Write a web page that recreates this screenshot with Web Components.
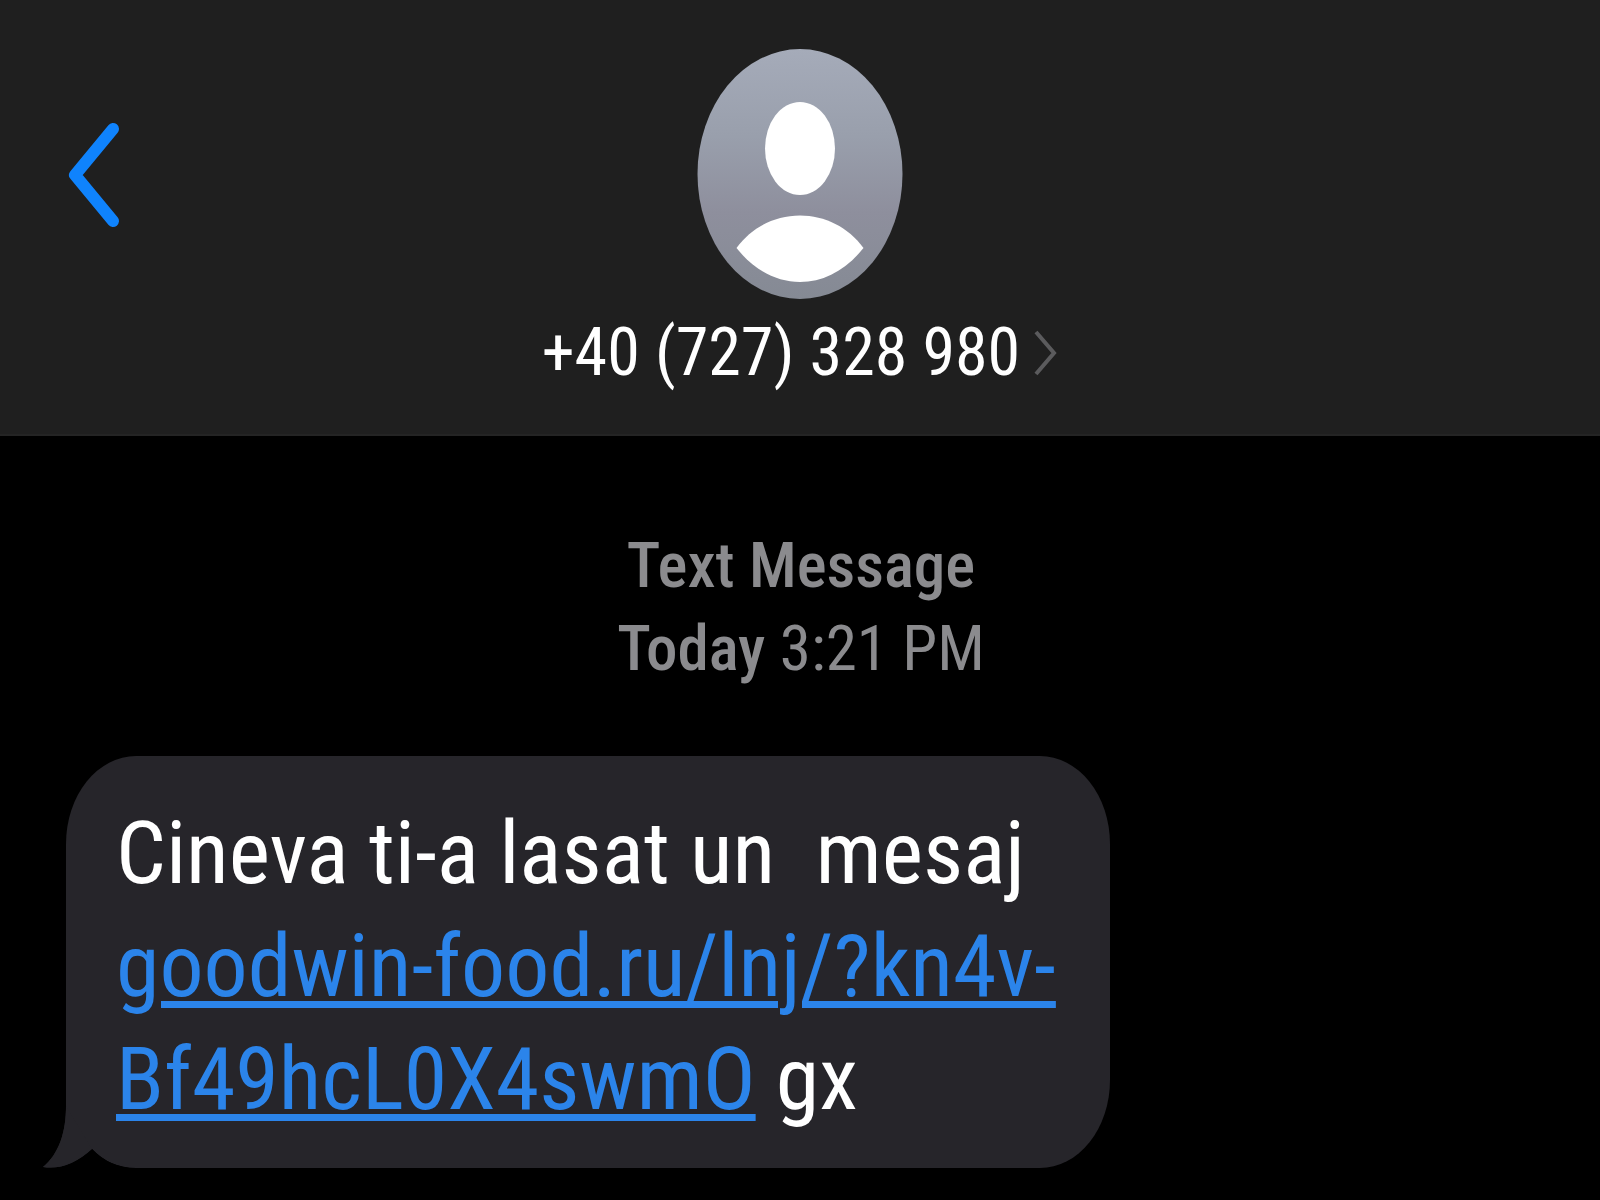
<!DOCTYPE html>
<html lang="ro">
<head>
<meta charset="utf-8">
<meta name="viewport" content="width=device-width, initial-scale=1">
<title>Messages</title>
<style>
html, body { margin: 0; background: #000; }
body { min-height: 100vh; font-family: "Roboto Condensed", "Roboto", sans-serif; color: #fff; }
</style>
</head>
<body>
<chat-screen>
  <chat-header slot="header">+40 (727) 328 980</chat-header>
  <chat-stamp><span>Text Message</span><span slot="day">Today</span><span slot="time">3:21 PM</span></chat-stamp>
  <chat-bubble>Cineva ti-a lasat un&nbsp; mesaj <a href="#">goodwin-food.ru/lnj/?kn4v-Bf49hcL0X4swmO</a> gx</chat-bubble>
</chat-screen>
<script>
const define = (name, html) => {
  const template = document.createElement('template');
  template.innerHTML = html;
  customElements.define(name, class extends HTMLElement {
    constructor() {
      super();
      this.attachShadow({ mode: 'open' }).append(template.content.cloneNode(true));
    }
  });
};

define('contact-avatar', `
<style>
:host { display: block; width: 206px; height: 250px; }
svg { display: block; width: 100%; height: 100%; }
</style>
<svg viewBox="0 0 206 250" aria-hidden="true">
  <defs><linearGradient id="g" x1="0" y1="0" x2="0" y2="1">
    <stop offset="0" stop-color="#a5abb9"/><stop offset=".35" stop-color="#999fac"/>
    <stop offset=".65" stop-color="#8e8f9d"/><stop offset="1" stop-color="#858a94"/>
  </linearGradient></defs>
  <ellipse cx="103" cy="125" rx="102.5" ry="125" fill="url(#g)"/>
  <ellipse cx="103" cy="99.500" rx="35" ry="46.500" fill="#fff"/>
  <path d="M39.500 199 C55 178 78 166.500 103 166.500 C128 166.500 151 178 166.500 199 C149 221 127 233 103 233 C79 233 57 221 39.500 199Z" fill="#fff"/>
</svg>`);

define('chat-header', `
<style>
:host { display: block; background: #1f1f1f; border-bottom: 2px solid #242424; }
header { display: grid; grid-template-columns: 1fr auto 1fr; padding: 49px 64px 43px; }
button { border: 0; background: none; padding: 0; color: inherit; font: inherit; cursor: pointer; }
.back { justify-self: start; align-self: start; padding-top: 72px; }
svg { display: block; }
.contact { display: flex; flex-direction: column; align-items: center; gap: 15px; }
.name { display: flex; align-items: center; gap: 14px; font-size: 66px; line-height: 77px; white-space: nowrap; }
</style>
<header>
  <button class="back" aria-label="Back"><svg width="60" height="108" viewBox="0 0 60 108"><path d="M49 8 L11 54 L49 100" fill="none" stroke="#0f83fd" stroke-width="12" stroke-linecap="round" stroke-linejoin="round"/></svg></button>
  <button class="contact">
    <contact-avatar></contact-avatar>
    <span class="name"><slot></slot><svg width="24" height="46" viewBox="0 0 24 46" aria-hidden="true"><path d="M2 2 L20 23 L2 44" fill="none" stroke="#5b5b5d" stroke-width="4"/></svg></span>
  </button>
</header>`);

define('chat-stamp', `
<style>
:host { display: block; text-align: center; color: #8b8b8e; font-size: 63px; line-height: 83px; font-weight: 500; }
div { white-space: nowrap; }
::slotted([slot="time"]) { font-weight: 400; }
</style>
<div><slot></slot></div>
<div><slot name="day"></slot> <slot name="time"></slot></div>`);

define('chat-bubble', `
<style>
:host { display: block; position: relative; isolation: isolate; box-sizing: border-box; width: 71%; padding: 40px 48px 33px 50px; background: #26252a; border-radius: 70px / 88px; font-size: 88px; line-height: 113px; }
::slotted(a) { color: #2b84ea; text-decoration-line: underline; text-decoration-thickness: 7px; text-underline-offset: 5px; }
svg { position: absolute; left: -24px; bottom: 0; z-index: -1; }
</style>
<svg width="94" height="90" viewBox="0 0 94 90" aria-hidden="true"><path d="M24 0 V28 C24 54 17 76 1 89 Q26 93 50 71 Q68 90 94 90 V0Z" fill="#26252a"/><path d="M1 90 Q26 93 50 71 Q68 90 94 90Z" fill="#000"/><path d="M24 28 C24 54 17 76 1 89 Q26 93 50 71Z" fill="#26252a"/></svg>
<slot></slot>`);

define('chat-screen', `
<style>
:host { display: flex; flex-direction: column; min-height: 100vh; }
main { display: flex; flex-direction: column; gap: 66px; padding: 88px 64px 32px 66px; }
::slotted(chat-stamp) { align-self: center; }
</style>
<slot name="header"></slot>
<main><slot></slot></main>`);
</script>
</body>
</html>
